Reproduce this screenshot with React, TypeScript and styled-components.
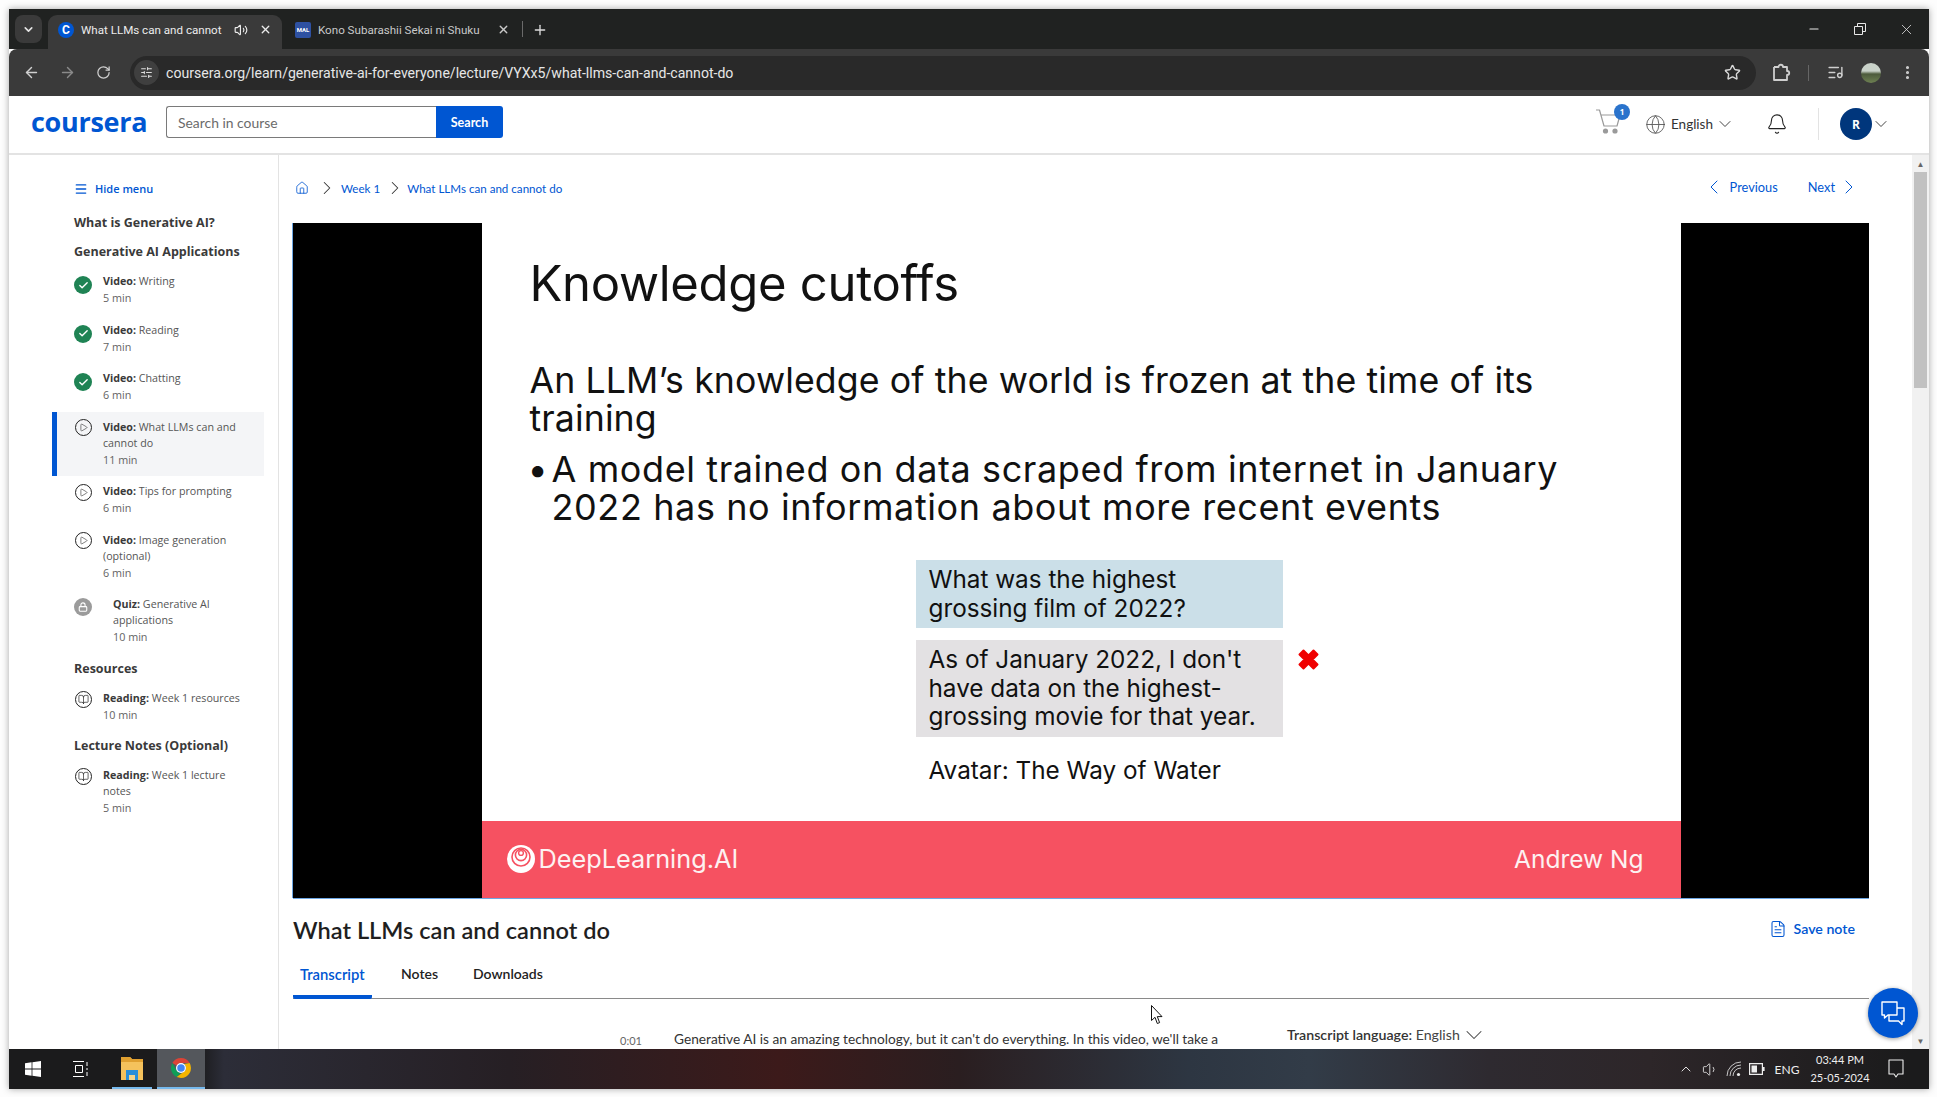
import React from "react";
import styled, { createGlobalStyle } from "styled-components";
import {
  ChevronDown, ChevronLeft, ChevronRight, Volume2, X, Plus, ArrowLeft, ArrowRight, RotateCw,
  Star, EllipsisVertical, Minus, ListMusic, Globe, Bell, Menu, Home,
  Check, Lock, BookOpen, FileText, Play, ChevronUp, Volume1, SlidersHorizontal,
} from "lucide-react";

const UI = `"Open Sans", "Noto Sans", sans-serif`;
const SRC = `Lato, "Noto Sans", sans-serif`;
const CHROME = `Roboto, "Noto Sans", sans-serif`;
const SLIDE = `Inter, "Open Sans", sans-serif`;

const Global = createGlobalStyle`
  html, body { margin: 0; padding: 0; background: #fff; overflow: hidden; }
  #root { width: 1937px; height: 1097px; }
  * { box-sizing: border-box; }
`;

const Page = styled.div`
  width: 1937px; height: 1097px; padding: 9px 8px 8px 9px; background: #fdfdfd;
`;
const Screen = styled.div`
  position: relative; width: 1920px; height: 1080px; display: flex; flex-direction: column;
  background: #fff; box-shadow: 0 0 7px rgba(0,0,0,.35); overflow: hidden;
`;
const TabStrip = styled.div`
  height: 40px; background: #202221; display: flex; align-items: flex-end; padding-left: 6px;
  font: 11.6px ${CHROME}; color: #e3e3e3; flex: none;
`;
const TabListBtn = styled.div`
  width: 27px; height: 28px; border-radius: 8px; background: #3a3a3a; display: flex;
  align-items: center; justify-content: center; margin: 0 6px 6px 0; color: #e3e3e3;
`;
const Tab = styled.div<{ $active?: boolean; $w: number }>`
  width: ${p => p.$w}px; height: 34px; border-radius: 9px 9px 0 0; display: flex; align-items: center;
  padding: 0 ${p => (p.$active ? 10 : 7)}px 5px ${p => (p.$active ? 10 : 13)}px; gap: 7px;
  background: ${p => (p.$active ? "#3a3a3a" : "transparent")};
  color: ${p => (p.$active ? "#ececec" : "#c9c9c9")};
`;
const Favicon = styled.div<{ $bg: string; $round?: boolean }>`
  width: 16px; height: 16px; border-radius: ${p => (p.$round ? "50%" : "2px")}; background: ${p => p.$bg};
  color: #fff; font: 700 ${p => (p.$round ? "12px" : "6px")} ${CHROME}; display: flex; align-items: center;
  justify-content: center; flex: none;
`;
const TabTitle = styled.div`
  flex: 1; white-space: nowrap; min-width: 0;
`;
const Speaker = styled.span`
  display: flex; margin-right: 4px;
`;
const TabDivider = styled.div`
  width: 1px; height: 16px; background: #6a6a6a; margin: 0 9px 12px 5px;
`;
const NewTab = styled.div`
  height: 34px; display: flex; align-items: center; color: #dcdcdc; padding-bottom: 5px;
`;
const WinButtons = styled.div`
  margin-left: auto; height: 40px; display: flex; align-items: center; color: #e8e8e8;
`;
const WinBtn = styled.div`
  width: 46px; display: flex; justify-content: center;
`;
const Toolbar = styled.div`
  height: 47px; background: #3a3a3a; border-radius: 8px 8px 0 0; display: flex; align-items: center; color: #cfcfcf;
  padding-left: 4px; flex: none;
`;
const NavBtn = styled.div<{ $dim?: boolean }>`
  width: 36px; display: flex; justify-content: center; color: ${p => (p.$dim ? "#8a8a8a" : "#d0d0d0")};
`;
const Address = styled.div`
  width: 1626px; height: 34px; margin-left: 9px; background: #292929; border-radius: 17px; display: flex;
  align-items: center; padding: 0 15px 0 4px; font: 14.1px ${CHROME}; color: #e6e6e6;
`;
const SiteInfo = styled.div`
  width: 25px; height: 25px; background: #3f3f3f; border-radius: 50%; display: flex; align-items: center;
  justify-content: center; margin-right: 7px; color: #ddd;
`;
const AddressEnd = styled.div`
  margin-left: auto; display: flex; color: #d8d8d8;
`;
const ToolIcons = styled.div`
  display: flex; align-items: center; margin-left: 15px;
`;
const ToolSep = styled.div`
  width: 1px; height: 16px; background: #666; margin: 0 18px 0 17px;
`;
const ProfilePic = styled.div`
  width: 20px; height: 20px; border-radius: 50%; margin: 0 18px 0 17px;
  background: linear-gradient(180deg, #c9d2c9 0 40%, #4d5b3c 55%, #6d8052 100%);
`;
const Header = styled.header`
  height: 59px; border-bottom: 2px solid #e3e3e3; display: flex; align-items: center; padding-left: 22px;
  flex: none; position: relative;
`;
const Logo = styled.div`
  width: 135px; font: 700 27px ${UI}; color: #0056d2; letter-spacing: -0.3px; line-height: 30px; margin-top: -5px;
`;
const SearchBox = styled.div`
  width: 270px; height: 32px; border: 1px solid #7a7a7a; border-right: 0; border-radius: 3px 0 0 3px;
  font: 13.9px ${SRC}; color: #6b6b6b; display: flex; align-items: center; padding-left: 11px; margin-top: -5px;
`;
const SearchBtn = styled.div`
  width: 67px; height: 32px; background: #0056d2; color: #fff; font: 700 12.5px ${SRC}; border-radius: 0 3px 3px 0;
  display: flex; align-items: center; justify-content: center; margin-top: -5px;
`;
const HeaderRight = styled.div`
  margin-left: auto; display: flex; align-items: center; padding-right: 38px; margin-top: -1px;
`;
const Cart = styled.div`
  position: relative; margin-right: 24px; height: 26px; width: 26px; margin-top: -5px;
`;
const Badge = styled.div`
  position: absolute; right: -9px; top: -5px; width: 16px; height: 16px; border-radius: 50%; background: #2a73cc;
  color: #fff; font: 700 8px ${UI}; display: flex; align-items: center; justify-content: center;
`;
const Lang = styled.div`
  display: flex; align-items: center; font: 13.5px ${SRC}; color: #333; gap: 5px; width: 121px;
  svg + svg { margin-left: -3px; }
`;
const BellWrap = styled.div`
  color: #222; margin-right: 30px; display: flex;
`;
const HeadSep = styled.div`
  width: 1px; height: 32px; background: #e3e3e3; margin-right: 21px;
`;
const AvatarCircle = styled.div`
  width: 32px; height: 32px; border-radius: 50%; background: #00367c; color: #fff; font: 700 12px ${UI};
  display: flex; align-items: center; justify-content: center; margin-right: -1px;
`;
const Body = styled.div`
  flex: 1; display: flex; min-height: 0; overflow: hidden;
`;
const Sidebar = styled.aside`
  width: 270px; flex: none; border-right: 1px solid #e3e3e3; padding: 26px 14px 0 43px; font-family: ${UI};
`;
const HideMenu = styled.div`
  height: 16px; display: flex; align-items: center; padding-left: 22px; gap: 7px; color: #0056d2;
  font: 600 11px/16px ${UI}; margin-bottom: 18px;
`;
const SectionTitle = styled.div<{ $mt?: number; $mb?: number }>`
  font: 700 12.5px/16px ${UI}; color: #3a3a3a; padding-left: 22px; margin-top: ${p => p.$mt ?? 0}px;
  margin-bottom: ${p => p.$mb ?? 0}px;
`;
const Item = styled.div<{ $active?: boolean }>`
  display: flex; margin-bottom: 0.5px; padding: 7px 10px 7px ${p => (p.$active ? 17 : 22)}px;
  background: ${p => (p.$active ? "#f4f5f7" : "transparent")};
  border-left: ${p => (p.$active ? "5px solid #0056d2" : "0")};
`;
const ItemIcon = styled.div<{ $indent?: boolean; $top: number }>`
  width: 18px; height: 18px; flex: none; margin: ${p => p.$top}px ${p => (p.$indent ? 21 : 11)}px 0 0; display: flex;
  align-items: center; justify-content: center;
`;
const ItemLabel = styled.div`
  font: 400 10.7px/16px ${UI}; color: #555;
  b { font-weight: 700; color: #3a3a3a; }
`;
const ItemTime = styled.div`
  font: 400 10.8px/18px ${UI}; color: #636363;
`;
const Circle = styled.div<{ $bg: string }>`
  width: 18px; height: 18px; border-radius: 50%; background: ${p => p.$bg}; color: #fff; display: flex;
  align-items: center; justify-content: center;
`;
const RingIcon = styled.div`
  width: 17px; height: 17px; border-radius: 50%; border: 1px solid #222; color: #222; display: flex;
  align-items: center; justify-content: center;
`;
const Main = styled.main`
  flex: 1; min-width: 0; padding: 25px 43px 0 14px; overflow: hidden;
`;
const Crumbs = styled.div`
  height: 16px; display: flex; align-items: center; color: #0056d2; font: 11.6px ${SRC}; margin-bottom: 27px;
  padding-left: 2px;
`;
const CrumbSep = styled.span<{ $l: number; $r: number }>`
  color: #333; display: flex; margin: 0 ${p => p.$r}px 0 ${p => p.$l}px;
  svg { margin: 0 -2.5px; }
`;
const Pager = styled.div`
  margin-left: auto; display: flex; align-items: center; gap: 5px; font: 12.8px ${SRC}; padding-right: 12px; margin-top: -2px;
  svg { margin: 0 -3.5px; }
  svg:first-child { margin-right: -1.5px; }
`;
const PagerGap = styled.span`
  width: 20px;
`;
const Video = styled.div`
  height: 675px; background: #000; display: flex; justify-content: center; box-shadow: -1px 0 0 #6da7e4, 0 1px 0 #6da7e4;
`;
const Slide = styled.div`
  width: 1199px; background: #fff; display: flex; flex-direction: column; font-family: ${SLIDE}; color: #111;
`;
const SlideMain = styled.div`
  flex: 1; padding: 31px 0 0 48px;
`;
const SlideTitle = styled.div`
  font-size: 49px; line-height: 60px; letter-spacing: -0.3px;
`;
const SlideBody = styled.div`
  font-size: 35.7px; line-height: 38px; margin-top: 47px; letter-spacing: 0.1px; white-space: nowrap;
`;
const Bullet = styled.div`
  font-size: 36px; line-height: 38px; margin-top: 13px; padding-left: 22px; position: relative; white-space: nowrap;
  letter-spacing: 0.6px;
  &::before { content: "•"; position: absolute; left: -2px; }
`;
const Qa = styled.div`
  margin: 34px 0 0 386px; display: flex; flex-direction: column; font-size: 24.3px; line-height: 28.5px;
`;
const QaBox = styled.div<{ $bg: string }>`
  width: 367px; padding: 5px 13px 6px; background: ${p => p.$bg}; white-space: nowrap;
`;
const QaRow = styled.div`
  display: flex; align-items: flex-start; gap: 13px; margin-top: 12px;
`;
const Wrong = styled.div`
  margin-top: 7px; display: flex;
`;
const QaPlain = styled.div`
  padding-left: 13px; margin-top: 19px; line-height: 28px;
`;
const Band = styled.div`
  height: 77px; background: #f65161; display: flex; align-items: center; justify-content: space-between;
  color: #fdf1f1; padding: 0 37px 2px 25px; flex: none; font-size: 25.3px;
`;
const DlLogo = styled.div`
  display: flex; align-items: center; gap: 4px;
`;
const BandName = styled.span`
  font-size: 24.5px;
`;
const TitleRow = styled.div`
  height: 30px; margin-top: 17px; display: flex; align-items: center; justify-content: space-between; padding-right: 14px;
`;
const LectureTitle = styled.h1`
  margin: 0; font: 600 23.6px/30px ${SRC}; color: #1f1f1f;
`;
const SaveNote = styled.div`
  color: #0056d2; font: 600 14.2px ${SRC}; display: flex; align-items: center; gap: 7px; margin-top: -3px;
`;
const Tabs = styled.div`
  height: 49px; margin-top: 5px; border-bottom: 1px solid #8a8a8a; display: flex; font: 600 14px ${SRC}; color: #222;
`;
const TabItem = styled.div<{ $active?: boolean; $w: number; $mr: number }>`
  width: ${p => p.$w}px; margin-right: ${p => p.$mr}px; height: 49px; display: flex; align-items: center;
  padding: 2px 0 0 ${p => (p.$active ? 7 : 0)}px; font-size: ${p => (p.$active ? 14.8 : 14)}px;
  color: ${p => (p.$active ? "#0056d2" : "#222")}; border-bottom: 4px solid ${p => (p.$active ? "#0056d2" : "transparent")};
  border-radius: 0 0 2px 2px;
`;
const Transcript = styled.div`
  display: flex; margin-top: 28px; padding-left: 327px; white-space: nowrap; position: relative; color: #444;
`;
const Stamp = styled.div`
  width: 54px; font: 11px/18px ${SRC}; color: #666; margin-top: 5px;
`;
const Line = styled.div`
  width: 613px; font: 13.7px/18px ${SRC}; color: #333; margin-top: 3px;
`;
const Lang2 = styled.div`
  font: 14.2px/18px ${SRC}; color: #444; display: flex; align-items: center; margin-top: -1px; height: 18px;
`;
const Strong = styled.span`
  font-weight: 600; color: #333;
`;
const ScrollBar = styled.div`
  width: 17px; background: #f1f1f1; flex: none; display: flex; flex-direction: column; align-items: center;
`;
const ScrollArrow = styled.div`
  height: 17px; display: flex; align-items: center; justify-content: center; color: #666; font: 8px ${UI};
`;
const Thumb = styled.div`
  width: 13px; height: 216px; background: #c1c1c1;
`;
const ScrollSpace = styled.div`
  flex: 1;
`;
const ChatBtn = styled.div`
  position: absolute; left: 1859px; top: 979px; width: 50px; height: 50px; border-radius: 50%; background: #0056d2;
  box-shadow: 0 1px 4px rgba(0,0,0,.4); display: flex; align-items: center; justify-content: center; color: #fff;
`;
const Cursor = styled.div`
  position: absolute; left: 1142px; top: 996px; display: flex;
`;
const Taskbar = styled.footer`
  height: 40px; flex: none; display: flex; align-items: center; color: #fff; font: 12px ${SRC};
  background: linear-gradient(90deg, #1b1b1c 0, #1b1b1c 190px, #2c2d38 215px, #261f24 500px, #3c1a1a 770px, #2a1e20 950px, #2d3642 1180px, #323c48 1300px, #2e2a30 1480px, #2d2629 1640px, #1b1b1c 1900px);
`;
const StartZone = styled.div`
  width: 48px; display: flex; justify-content: center;
`;
const TaskSlot = styled.div<{ $w: number; $mr: number; $run?: boolean; $active?: boolean }>`
  width: ${p => p.$w}px; height: 40px; display: flex; align-items: center; justify-content: center;
  background: ${p => (p.$active ? "#54575c" : "transparent")};
  border-bottom: ${p => (p.$run ? "2px solid #76b9ed" : "0")}; margin-right: ${p => p.$mr}px;
`;
const Tray = styled.div`
  margin-left: auto; display: flex; align-items: center; height: 40px; color: #eee;
`;
const TrayIcon = styled.div<{ $w: number }>`
  width: ${p => p.$w}px; display: flex; justify-content: center;
`;
const Eng = styled.div`
  width: 36px; font-size: 12px; text-align: center;
`;
const Clock = styled.div`
  width: 70px; text-align: center; font-size: 11px; line-height: 18px;
`;
const Notify = styled.div`
  width: 54px; display: flex; padding-left: 12px;
`;

const PlayIcon = () => <RingIcon><Play size={9} strokeWidth={1.5} /></RingIcon>;
const BookIcon = () => <RingIcon><BookOpen size={11} strokeWidth={1.5} /></RingIcon>;
const DoneIcon = () => <Circle $bg="#1f8354"><Check size={11} strokeWidth={3} /></Circle>;
const LockIcon = () => <Circle $bg="#9b9b9b"><Lock size={10} strokeWidth={2.6} /></Circle>;

type It = { icon: React.ReactNode; top: number; kind: string; name: React.ReactNode; time: string; active?: boolean; indent?: boolean };

const Row = ({ icon, top, kind, name, time, active, indent }: It) => (
  <Item $active={active}>
    <ItemIcon $indent={indent} $top={top}>{icon}</ItemIcon>
    <div>
      <ItemLabel><b>{kind}:</b> {name}</ItemLabel>
      <ItemTime>{time}</ItemTime>
    </div>
  </Item>
);

const CartIcon = () => (
  <svg width="26" height="26" viewBox="0 0 26 26" fill="none" stroke="#9a9a9a" strokeWidth="1.2" strokeLinejoin="round">
    <path d="M1 1H4.5L9 17H22L25 6H6" />
    <circle cx="10.5" cy="22" r="2.6" fill="#9a9a9a" stroke="none" />
    <circle cx="20" cy="22" r="2.6" fill="#9a9a9a" stroke="none" />
  </svg>
);
const WinLogo = () => (
  <svg width="16" height="16" viewBox="0 0 16 16" fill="#fff">
    <path d="M0 2.3 6.6 1.3V7.6H0zM7.4 1.2 16 0V7.6H7.4zM0 8.4H6.6V14.7L0 13.7zM7.4 8.4H16V16L7.4 14.8z" />
  </svg>
);
const TaskView = () => (
  <svg width="16" height="16" viewBox="0 0 16 16" fill="none" stroke="#fff" strokeWidth="1">
    <path d="M0 .5H11M0 15.5H11M2.5 4.5H9.5V11.5H2.5zM14 1V5M14 7V9M14 11V15" />
  </svg>
);
const Explorer = () => (
  <svg width="22" height="26" viewBox="0 0 22 26">
    <path d="M0 2H9L11 4H22V25H0z" fill="#f5c25c" />
    <path d="M0 2H9L11 4H22V7H0z" fill="#e0a030" />
    <path d="M5 15H17V25H5z" fill="#2a8fd8" />
    <path d="M8 20H14V25H8z" fill="#f5d58a" />
  </svg>
);
const ChromeLogo = () => (
  <svg width="24" height="24" viewBox="0 0 48 48">
    <path d="M24 4A20 20 0 0 1 41.3 14H24A10 10 0 0 0 15.3 19L6.7 14A20 20 0 0 1 24 4z" fill="#db4437" />
    <path d="M6.7 14 15.3 29A10 10 0 0 0 24 34L15.4 42A20 20 0 0 1 6.7 14z" fill="#0f9d58" />
    <path d="M41.3 14A20 20 0 0 1 24 44L15.4 42 32.7 29A10 10 0 0 0 34 24 10 10 0 0 0 30 16z" fill="#f4b400" />
    <circle cx="24" cy="24" r="10" fill="#fff" />
    <circle cx="24" cy="24" r="7.5" fill="#4285f4" />
  </svg>
);
const RippleLogo = () => (
  <svg width="28" height="28" viewBox="0 0 28 28">
    <circle cx="14" cy="14" r="14" fill="#fff" />
    <circle cx="14" cy="12" r="9" fill="none" stroke="#f65161" strokeWidth="1.6" />
    <circle cx="14" cy="10" r="5.6" fill="none" stroke="#f65161" strokeWidth="1.6" />
    <circle cx="14" cy="8" r="2.4" fill="none" stroke="#f65161" strokeWidth="1.4" />
  </svg>
);
const RedX = () => (
  <svg width="25" height="25" viewBox="0 0 25 25">
    <path d="M3.5 7.5 7.5 3.5 12.5 8.5 17.5 3.5 21.5 7.5 16.5 12.5 21.5 17.5 17.5 21.5 12.5 16.5 7.5 21.5 3.5 17.5 8.5 12.5z" fill="#f00000" stroke="#f00000" strokeWidth="2" strokeLinejoin="round" />
  </svg>
);
const Pointer = () => (
  <svg width="12" height="20" viewBox="0 0 12 20">
    <path d="M.5.5V15.5L4 12.3 6.3 18.5 8.6 17.6 6.3 11.6H11z" fill="#fff" stroke="#111" strokeWidth="1" />
  </svg>
);
const Chat = () => (
  <svg width="26" height="26" viewBox="0 0 26 26" fill="none" stroke="#fff" strokeWidth="1.4" strokeLinejoin="round">
    <path d="M2 2H17V15H8L4.5 18V15H2z" />
    <path d="M17 8H24V21H22V24.5L18.5 21H9V15" />
  </svg>
);
const Extension = () => (
  <svg width="20" height="20" viewBox="0 0 20 20" fill="none" stroke="#cfcfcf" strokeWidth="1.8" strokeLinejoin="round">
    <path d="M3 4H7.5C7.5 1 12 1 12 4H16V8C19 8 19 12 16 12V17H3V13" />
    <path d="M3 4V13" />
  </svg>
);
const TrayWifi = () => (
  <svg width="16" height="16" viewBox="0 0 16 16" fill="none" stroke="#eee" strokeWidth="1">
    <path d="M1 15A14 14 0 0 1 15 1M4 15A11 11 0 0 1 15 4M7 15A8 8 0 0 1 15 7" opacity=".8" />
    <circle cx="12.5" cy="13.5" r="1.6" fill="#eee" stroke="none" />
  </svg>
);
const TrayBattery = () => (
  <svg width="16" height="12" viewBox="0 0 16 12" fill="none" stroke="#eee" strokeWidth="1.2">
    <path d="M.6.6H13.4V11.4H.6z" />
    <path d="M2.5 2.5H8V9.5H2.5z" fill="#eee" stroke="none" />
    <path d="M14 4H15.6V8H14z" fill="#eee" stroke="none" />
  </svg>
);
const TrayBubble = () => (
  <svg width="18" height="20" viewBox="0 0 18 20" fill="none" stroke="#eee" strokeWidth="1.1" strokeLinejoin="round">
    <path d="M2 1H16V15H11L9 18 7 15H2z" />
  </svg>
);

export default function App() {
  return (
    <Page>
      <Global />
      <Screen>
        <TabStrip>
          <TabListBtn><ChevronDown size={13} strokeWidth={3} /></TabListBtn>
          <Tab $active $w={234}>
            <Favicon $bg="#0056d2" $round>C</Favicon>
            <TabTitle>What LLMs can and cannot</TabTitle>
            <Speaker><Volume2 size={14} /></Speaker>
            <X size={13} strokeWidth={2.5} />
          </Tab>
          <Tab $w={235}>
            <Favicon $bg="#2e51a2">MAL</Favicon>
            <TabTitle>Kono Subarashii Sekai ni Shuku</TabTitle>
            <X size={13} strokeWidth={2.5} />
          </Tab>
          <TabDivider />
          <NewTab><Plus size={16} strokeWidth={2} /></NewTab>
          <WinButtons>
            <WinBtn><Minus size={14} strokeWidth={1.8} /></WinBtn>
            <WinBtn>
              <svg width="12" height="12" viewBox="0 0 12 12" fill="none" stroke="#e8e8e8"><path d="M.5 3.5H8.5V11.5H.5zM3.5 3.5V.5H11.5V8.5H8.5" /></svg>
            </WinBtn>
            <WinBtn><X size={17} strokeWidth={1.1} /></WinBtn>
          </WinButtons>
        </TabStrip>
        <Toolbar>
          <NavBtn><ArrowLeft size={17} strokeWidth={2} /></NavBtn>
          <NavBtn $dim><ArrowRight size={17} strokeWidth={2} /></NavBtn>
          <NavBtn><RotateCw size={15} strokeWidth={2} /></NavBtn>
          <Address>
            <SiteInfo><SlidersHorizontal size={13} /></SiteInfo>
            coursera.org/learn/generative-ai-for-everyone/lecture/VYXx5/what-llms-can-and-cannot-do
            <AddressEnd><Star size={17} strokeWidth={2} /></AddressEnd>
          </Address>
          <ToolIcons>
            <Extension />
            <ToolSep />
            <ListMusic size={17} />
            <ProfilePic />
            <EllipsisVertical size={17} strokeWidth={2.4} />
          </ToolIcons>
        </Toolbar>
        <Header>
          <Logo>coursera</Logo>
          <SearchBox>Search in course</SearchBox>
          <SearchBtn>Search</SearchBtn>
          <HeaderRight>
            <Cart>
              <CartIcon />
              <Badge>1</Badge>
            </Cart>
            <Lang>
              <Globe size={21} strokeWidth={1} color="#555" />
              English
              <ChevronDown size={20} strokeWidth={1.1} />
            </Lang>
            <BellWrap><Bell size={22} strokeWidth={1.2} /></BellWrap>
            <HeadSep />
            <AvatarCircle>R</AvatarCircle>
            <ChevronDown size={20} strokeWidth={1.1} color="#333" />
          </HeaderRight>
        </Header>
        <Body>
          <Sidebar>
            <HideMenu><Menu size={14} strokeWidth={2.4} />Hide menu</HideMenu>
            <SectionTitle $mb={13}>What is Generative AI?</SectionTitle>
            <SectionTitle $mb={6}>Generative AI Applications</SectionTitle>
            <Row top={3} icon={<DoneIcon />} kind="Video" name="Writing" time="5 min" />
            <Row top={3} icon={<DoneIcon />} kind="Video" name="Reading" time="7 min" />
            <Row top={3} icon={<DoneIcon />} kind="Video" name="Chatting" time="6 min" />
            <Row top={0} active icon={<PlayIcon />} kind="Video" name={<>What LLMs can and<br />cannot do</>} time="11 min" />
            <Row top={0} icon={<PlayIcon />} kind="Video" name="Tips for prompting" time="6 min" />
            <Row top={0} icon={<PlayIcon />} kind="Video" name={<>Image generation<br />(optional)</>} time="6 min" />
            <Row top={2} indent icon={<LockIcon />} kind="Quiz" name={<>Generative AI<br />applications</>} time="10 min" />
            <SectionTitle $mt={8} $mb={6}>Resources</SectionTitle>
            <Row top={0} icon={<BookIcon />} kind="Reading" name="Week 1 resources" time="10 min" />
            <SectionTitle $mt={7} $mb={6}>Lecture Notes (Optional)</SectionTitle>
            <Row top={0} icon={<BookIcon />} kind="Reading" name={<>Week 1 lecture<br />notes</>} time="5 min" />
          </Sidebar>
          <Main>
            <Crumbs>
              <Home size={14} strokeWidth={1.4} />
              <CrumbSep $l={9} $r={6}><ChevronRight size={22} strokeWidth={1.1} /></CrumbSep>
              Week 1
              <CrumbSep $l={6} $r={4}><ChevronRight size={22} strokeWidth={1.1} /></CrumbSep>
              What LLMs can and cannot do
              <Pager>
                <ChevronLeft size={24} strokeWidth={1} />
                Previous
                <PagerGap />
                Next
                <ChevronRight size={24} strokeWidth={1} />
              </Pager>
            </Crumbs>
            <Video>
              <Slide>
                <SlideMain>
                  <SlideTitle>Knowledge cutoffs</SlideTitle>
                  <SlideBody>An LLM’s knowledge of the world is frozen at the time of its<br />training</SlideBody>
                  <Bullet>A model trained on data scraped from internet in January<br />2022 has no information about more recent events</Bullet>
                  <Qa>
                    <QaBox $bg="#cbdfe8">What was the highest<br />grossing film of 2022?</QaBox>
                    <QaRow>
                      <QaBox $bg="#e3e1e3">As of January 2022, I don't<br />have data on the highest-<br />grossing movie for that year.</QaBox>
                      <Wrong><RedX /></Wrong>
                    </QaRow>
                    <QaPlain>Avatar: The Way of Water</QaPlain>
                  </Qa>
                </SlideMain>
                <Band>
                  <DlLogo><RippleLogo />DeepLearning.AI</DlLogo>
                  <BandName>Andrew Ng</BandName>
                </Band>
              </Slide>
            </Video>
            <TitleRow>
              <LectureTitle>What LLMs can and cannot do</LectureTitle>
              <SaveNote><FileText size={18} strokeWidth={1.4} />Save note</SaveNote>
            </TitleRow>
            <Tabs>
              <TabItem $active $w={79} $mr={29}>Transcript</TabItem>
              <TabItem $w={46} $mr={26}>Notes</TabItem>
              <TabItem $w={90} $mr={0}>Downloads</TabItem>
            </Tabs>
            <Transcript>
              <Stamp>0:01</Stamp>
              <Line>Generative AI is an amazing technology, but it can't do everything. In this video, we'll take a</Line>
              <Lang2><span><Strong>Transcript language:</Strong> English</span><ChevronDown size={28} strokeWidth={0.9} /></Lang2>
            </Transcript>
          </Main>
          <ScrollBar>
            <ScrollArrow>▲</ScrollArrow>
            <Thumb />
            <ScrollSpace />
            <ScrollArrow>▼</ScrollArrow>
          </ScrollBar>
        </Body>
        <Taskbar>
          <StartZone><WinLogo /></StartZone>
          <TaskSlot $w={48} $mr={7}><TaskView /></TaskSlot>
          <TaskSlot $w={40} $mr={5} $run><Explorer /></TaskSlot>
          <TaskSlot $w={48} $mr={0} $run $active><ChromeLogo /></TaskSlot>
          <Tray>
            <TrayIcon $w={22}><ChevronUp size={16} strokeWidth={1.4} /></TrayIcon>
            <TrayIcon $w={26}><Volume1 size={17} strokeWidth={1.2} /></TrayIcon>
            <TrayIcon $w={22}><TrayWifi /></TrayIcon>
            <TrayIcon $w={24}><TrayBattery /></TrayIcon>
            <Eng>ENG</Eng>
            <Clock>03:44 PM<br />25-05-2024</Clock>
            <Notify><TrayBubble /></Notify>
          </Tray>
        </Taskbar>
        <ChatBtn><Chat /></ChatBtn>
        <Cursor><Pointer /></Cursor>
      </Screen>
    </Page>
  );
}
